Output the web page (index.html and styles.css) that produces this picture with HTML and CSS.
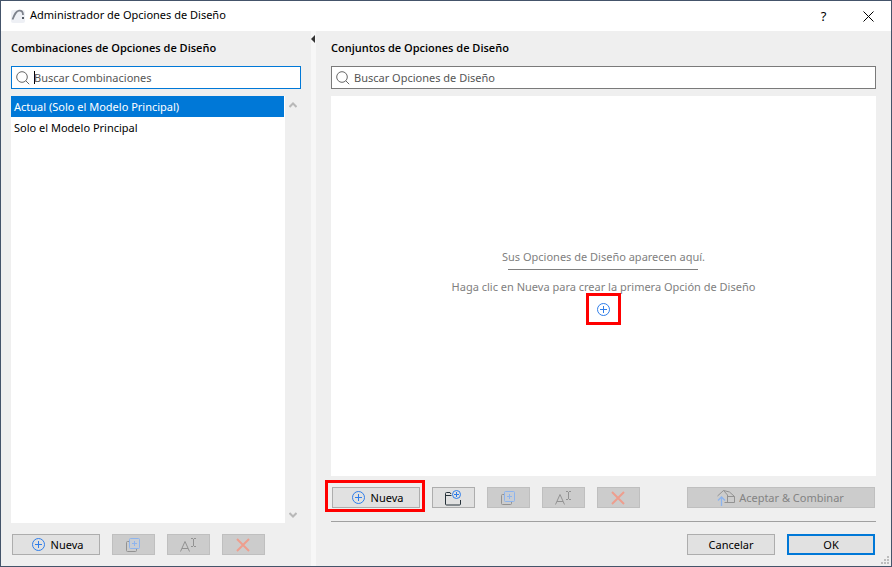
FILE: index.html
```html
<!DOCTYPE html>
<html lang="es">
  <head>
    <meta charset="utf-8" />
    <title>Administrador de Opciones de Diseño</title>
    <link rel="stylesheet" href="styles.css">
  </head>
  <body>
    <!-- shared icons -->
    <svg class="sprite">
      <symbol id="icon-plus" viewBox="0 0 13 13">
        <circle cx="6.5" cy="6.5" r="6" fill="none" stroke="#2f7de9" />
        <path d="M6.5 3v7M3 6.5h7" stroke="#2f7de9" />
      </symbol>
      <symbol id="icon-search" viewBox="0 0 14 14">
        <circle cx="6" cy="6" r="5.3" fill="none" stroke="#666" />
        <path d="M9.8 9.8l3.4 3.4" stroke="#666" />
      </symbol>
      <symbol id="icon-copy" viewBox="0 0 14 14">
        <path d="M3.5 3.5h-2q-1 0-1 1v8q0 1 1 1h8q1 0 1-1v-2" fill="none" stroke="#929292" />
        <rect x="3.5" y="0.5" width="10" height="10" rx="1" fill="#c8cdd4" stroke="#8db4ee" />
        <path d="M8.5 3v5M6 5.500h5" stroke="#8db4ee" />
      </symbol>
      <symbol id="icon-rename" viewBox="0 0 16 14">
        <path d="M0.5 13.5L5 3.500l4.500 10M2 10.500h6" fill="none" stroke="#929292" />
        <path d="M11 0.500h2M14 0.500h2M13.500 1v7M11 8.500h2M14 8.500h2" stroke="#929292" />
      </symbol>
      <symbol id="icon-delete" viewBox="0 0 14 14">
        <path d="M1 1l12 12M13 1L1 13" stroke="#ee9e8e" stroke-width="2" />
      </symbol>
    </svg>

    <header class="titlebar">
      <svg class="app-icon" viewBox="0 0 14 14">
        <rect width="14" height="13" y="1" rx="2" fill="#eef0f5" />
        <path d="M1.500 10.500C3.500 5.500 5 2 8 1.700c3-.3 4 1.500 4 4.300" fill="none" stroke="#7d828c" stroke-width="1.800" />
        <rect x="11" y="8" width="2" height="2" fill="#555b66" />
      </svg>
      <h1>Administrador de Opciones de Diseño</h1>
      <button class="window-button" aria-label="Ayuda">?</button>
      <button class="window-button" aria-label="Cerrar">
        <svg width="11" height="11" viewBox="0 0 11 11"><path d="M0.500 0.500l10 10M10.500 0.500l-10 10" stroke="#000" /></svg>
      </button>
    </header>

    <main>
      <section class="combinations">
        <h2>Combinaciones de Opciones de Diseño</h2>
        <label class="search active">
          <svg width="14" height="14"><use href="#icon-search" /></svg>
          <span class="caret"></span>
          <input type="text" placeholder="Buscar Combinaciones" aria-label="Buscar Combinaciones" />
        </label>
        <div class="list-area">
          <ul class="list">
            <li class="selected">Actual (Solo el Modelo Principal)</li>
            <li>Solo el Modelo Principal</li>
          </ul>
          <div class="scrollbar">
            <svg width="8" height="6" viewBox="0 0 8 6"><path d="M0.500 5L4 1.500 7.500 5" fill="none" stroke="#b8b8b8" stroke-width="2" /></svg>
            <svg width="8" height="6" viewBox="0 0 8 6"><path d="M0.500 1L4 4.500 7.500 1" fill="none" stroke="#b8b8b8" stroke-width="2" /></svg>
          </div>
        </div>
        <div class="toolbar">
          <button class="btn wide new"><svg width="13" height="13"><use href="#icon-plus" /></svg>Nueva</button>
          <button class="btn" disabled aria-label="Duplicar"><svg width="14" height="14"><use href="#icon-copy" /></svg></button>
          <button class="btn" disabled aria-label="Renombrar"><svg width="16" height="14"><use href="#icon-rename" /></svg></button>
          <button class="btn" disabled aria-label="Eliminar"><svg width="14" height="14"><use href="#icon-delete" /></svg></button>
        </div>
      </section>

      <div class="splitter">
        <svg width="4" height="8" viewBox="0 0 4 8"><path d="M4 0v8L0 4z" fill="#333" /></svg>
      </div>

      <section class="sets">
        <h2>Conjuntos de Opciones de Diseño</h2>
        <label class="search">
          <svg width="14" height="14"><use href="#icon-search" /></svg>
          <input type="text" placeholder="Buscar Opciones de Diseño" aria-label="Buscar Opciones de Diseño" />
        </label>
        <div class="empty">
          <p class="empty-title">Sus Opciones de Diseño aparecen aquí.</p>
          <p>Haga clic en Nueva para crear la primera Opción de Diseño</p>
          <button class="empty-add" aria-label="Nueva Opción de Diseño"><svg width="13" height="13"><use href="#icon-plus" /></svg></button>
        </div>
        <div class="toolbar">
          <button class="btn wide new marked"><svg width="13" height="13"><use href="#icon-plus" /></svg>Nueva</button>
          <button class="btn" aria-label="Nuevo conjunto">
            <svg width="16" height="16" viewBox="0 0 16 16">
              <path d="M0.500 5.500V3.500q0-1 1-1h3.500l1 1.500M0.500 5.500h6M0.500 5v9q0 1 1 1h13q1 0 1-1v-4" fill="none" stroke="#26323a" />
              <circle cx="11.500" cy="4.500" r="4" fill="#e1e1e1" stroke="#2f7de9" />
              <path d="M11.500 2v5M9 4.500h5" stroke="#2f7de9" />
            </svg>
          </button>
          <button class="btn" disabled aria-label="Duplicar"><svg width="14" height="14"><use href="#icon-copy" /></svg></button>
          <button class="btn" disabled aria-label="Renombrar"><svg width="16" height="14"><use href="#icon-rename" /></svg></button>
          <button class="btn" disabled aria-label="Eliminar"><svg width="14" height="14"><use href="#icon-delete" /></svg></button>
          <button class="btn merge" disabled>
            <svg width="18" height="16" viewBox="0 0 18 16">
              <path d="M0.500 6L6.500 0.500l4 4.500M6.500 0.500L12.500 2l5 4.500M10.500 5v7.500M17.500 6.500v6h-10M10.500 6.500h7" fill="none" stroke="#929292" />
              <path d="M4.500 16V7M1 10.500L4.500 7 8 10.500" fill="none" stroke="#8db4ee" stroke-width="1.300" />
            </svg>Aceptar &amp; Combinar
          </button>
        </div>
        <footer>
          <button class="btn wide">Cancelar</button>
          <button class="btn wide default">OK</button>
        </footer>
      </section>
    </main>
    <svg class="grip" width="8" height="8" viewBox="0 0 8 8"><path d="M6 0h2v2H6zM3 3h2v2H3zM6 3h2v2H6zM0 6h2v2H0zM3 6h2v2H3zM6 6h2v2H6z" fill="#bdbdbd" /></svg>
  </body>
</html>
```

FILE: styles.css
```css
* {
  box-sizing: border-box;
  margin: 0;
  padding: 0;
}
body {
  display: flex;
  flex-direction: column;
  position: relative;
  height: 100vh;
  border: 1px solid #44546a;
  background-color: #efefef;
  color: #000;
  font-family: "Noto Sans", "Open Sans", sans-serif;
  font-size: 11px;
}
button, input {
  font: inherit;
  color: inherit;
}
svg {
  flex: none;
}
.sprite {
  position: absolute;
  width: 0;
  height: 0;
}

/* title bar */
.titlebar {
  display: flex;
  align-items: center;
  height: 30px;
  padding-left: 10px;
  background-color: #fff;
}
.app-icon {
  width: 14px;
  height: 14px;
  margin-right: 5px;
}
.titlebar h1 {
  flex: 1;
  line-height: 28px;
  height: 30px;
  font-size: 11px;
  font-weight: normal;
}
.window-button {
  display: flex;
  align-items: center;
  justify-content: center;
  width: 45px;
  height: 30px;
  border: none;
  background: none;
  font-size: 13px;
}

/* panels */
main {
  display: flex;
  flex: 1;
  min-height: 0;
}
section {
  display: flex;
  flex-direction: column;
}
h2 {
  height: 35px;
  line-height: 34px;
  font-family: "Open Sans", sans-serif;
  font-size: 11px;
  font-weight: 600;
}
.combinations {
  width: 310px;
  padding: 0 10px 11px;
}
.splitter {
  width: 5px;
  padding-top: 4px;
  background-color: #f7f7f7;
}
.splitter svg {
  display: block;
}
.sets {
  flex: 1;
  padding: 0 15px 11px;
}

.search {
  display: flex;
  align-items: center;
  height: 23px;
  margin-bottom: 7px;
  padding: 0 4px;
  border: 1px solid #7a7a7a;
  background-color: #fff;
}
.search.active {
  border-color: #0078d7;
}
.search svg {
  margin-right: 4px;
}
.search input {
  flex: 1;
  min-width: 0;
  border: none;
  outline: none;
  background: none;
}
.search input::placeholder {
  color: #555;
}
.caret {
  width: 1px;
  height: 13px;
  margin-right: -1px;
  background-color: #000;
}

.list-area {
  display: flex;
  flex: 1;
}
.list {
  flex: 1;
  padding-right: 1px;
  background-color: #fff;
  list-style: none;
}
.list li {
  height: 21px;
  padding-left: 3px;
  line-height: 21px;
}
.list .selected {
  background-color: #0078d7;
  color: #fff;
}
.scrollbar {
  display: flex;
  flex-direction: column;
  align-items: center;
  justify-content: space-between;
  width: 16px;
  padding: 6px 0 5px;
}

/* empty state */
.empty {
  display: flex;
  flex: 1;
  flex-direction: column;
  align-items: center;
  justify-content: center;
  padding-top: 4px;
  background-color: #fff;
  color: #808080;
  line-height: 12px;
}
.empty-title::after {
  content: "";
  display: block;
  width: 190px;
  height: 1px;
  margin: 6px auto 11px;
  background-color: #808080;
}
.empty-add {
  display: flex;
  align-items: center;
  justify-content: center;
  width: 35px;
  height: 32px;
  border: 3px solid #f00;
  background: none;
}

/* buttons */
.toolbar {
  display: flex;
  gap: 12px;
  padding: 11px 1px 0;
}
.btn {
  display: flex;
  align-items: center;
  justify-content: center;
  position: relative;
  width: 43px;
  height: 21px;
  padding-right: 1px;
  border: 1px solid #adadad;
  background-color: #e1e1e1;
}
.btn:disabled {
  border-color: #bfbfbf;
  background-color: #ccc;
  color: #838383;
}
.btn.wide {
  width: 88px;
  padding: 0;
}
.btn.new {
  padding-left: 3px;
}
.btn.new svg {
  margin-right: 6px;
}
.btn.default {
  border: 2px solid #0078d7;
}
.btn.merge {
  width: 188px;
  margin-left: auto;
}
.btn.merge svg {
  margin-right: 4px;
}
.marked::after {
  content: "";
  position: absolute;
  inset: -8px -6px -5px -8px;
  border: 3px solid #f00;
}
footer {
  display: flex;
  justify-content: flex-end;
  gap: 12px;
  margin-top: 13px;
  padding: 12px 1px 0;
  border-top: 1px solid #a0a0a0;
}
.grip {
  position: absolute;
  right: 2px;
  bottom: 2px;
}
```
